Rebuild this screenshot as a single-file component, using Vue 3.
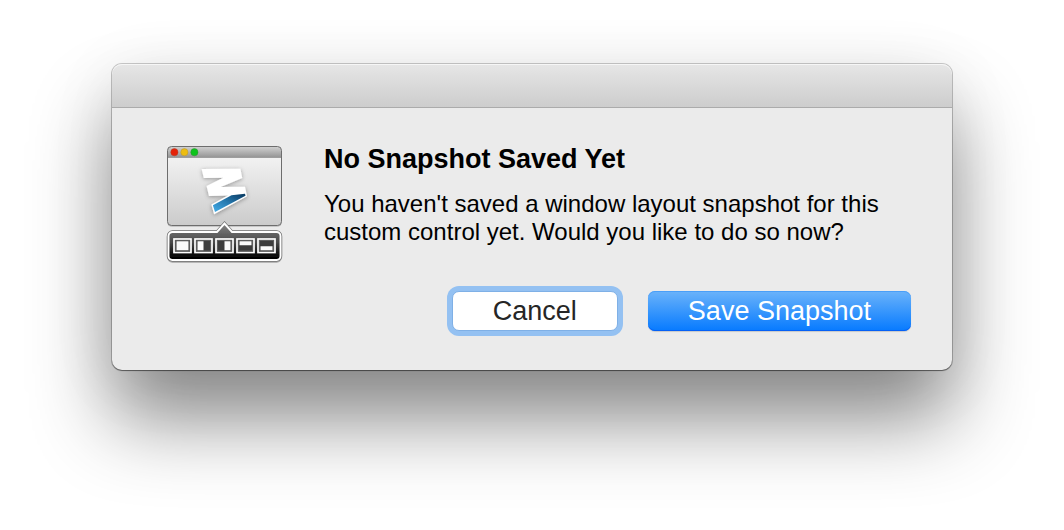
<script setup>
// Layout thumbnails: white pane inside each 12x9 cell
const layouts = [
  { x: 0, y: 0, w: 12, h: 9 },
  { x: 0, y: 0, w: 6, h: 9 },
  { x: 6, y: 0, w: 6, h: 9 },
  { x: 0, y: 0, w: 12, h: 4 },
  { x: 0, y: 5, w: 12, h: 4 },
]
</script>

<template>
  <main class="stage">
    <section class="dialog" role="alertdialog" aria-labelledby="title" aria-describedby="message">
      <header class="titlebar"></header>
      <div class="content">
        <svg class="icon" viewBox="0 0 120 120" aria-hidden="true">
          <defs>
            <linearGradient id="pane" x1="0" y1="0" x2="0" y2="1">
              <stop offset="0" stop-color="#f8f8f8" />
              <stop offset="1" stop-color="#cbcbcb" />
            </linearGradient>
            <linearGradient id="bar" x1="0" y1="0" x2="0" y2="1">
              <stop offset="0" stop-color="#d2d2d2" />
              <stop offset="1" stop-color="#939393" />
            </linearGradient>
            <linearGradient id="dark" x1="0" y1="82" x2="0" y2="115" gradientUnits="userSpaceOnUse">
              <stop offset="0" stop-color="#7c7c7c" />
              <stop offset="0.5" stop-color="#484848" />
              <stop offset="0.85" stop-color="#101010" />
              <stop offset="1" stop-color="#000" />
            </linearGradient>
            <linearGradient id="blue" x1="0" y1="1" x2="1" y2="0">
              <stop offset="0.1" stop-color="#3fa4de" />
              <stop offset="0.5" stop-color="#2678ae" />
              <stop offset="0.9" stop-color="#0d426b" />
            </linearGradient>
            <filter id="soft" x="-30%" y="-30%" width="160%" height="160%">
              <feDropShadow dx="0" dy="1" stdDeviation="2" flood-color="#000" flood-opacity="0.35" />
            </filter>
            <filter id="edge" x="-10%" y="-10%" width="120%" height="130%">
              <feDropShadow dx="0" dy="1" stdDeviation="0.7" flood-color="#000" flood-opacity="0.3" />
            </filter>
          </defs>

          <rect x="3.5" y="2.5" width="114" height="79" rx="4" fill="url(#pane)" filter="url(#edge)" />
          <path d="M3.5 13.5V6.5a4 4 0 0 1 4-4h106a4 4 0 0 1 4 4v7z" fill="url(#bar)" />
          <path d="M4 13.5h113" stroke="#858585" stroke-width="0.6" />
          <rect x="3.5" y="2.5" width="114" height="79" rx="4" fill="none" stroke="#6d6d6d" />
          <circle cx="10.4" cy="8.2" r="3.6" fill="#e52208" stroke="#b53a25" stroke-width="0.5" />
          <circle cx="20.4" cy="8.2" r="3.6" fill="#edbd10" stroke="#b79732" stroke-width="0.5" />
          <circle cx="30.4" cy="8.2" r="3.6" fill="#0dc41b" stroke="#2f8e36" stroke-width="0.5" />

          <g filter="url(#soft)">
            <path d="M37.7 25 76.4 24.7 78.2 34 56.7 43 81 42.7 83 52.2 50.1 70.2 47.4 60.4 64 51.4 45 51.9 42.6 42 59.4 33.7 39.8 34z" fill="#fff" />
            <path d="M48.900 61.200 67.500 51.200 81 49.700 81.500 51.700 51 68.100z" fill="url(#blue)" />
          </g>

          <g filter="url(#edge)">
            <path d="M8.5 88H53l7.5-8.5L68 88h44.500a4 4 0 0 1 4 4v20a4 4 0 0 1-4 4H8.500a4 4 0 0 1-4-4V92a4 4 0 0 1 4-4z" fill="none" stroke="#6f6f6f" stroke-width="3.400" />
            <path d="M8.5 88H53l7.500-8.500L68 88h44.500a4 4 0 0 1 4 4v20a4 4 0 0 1-4 4H8.500a4 4 0 0 1-4-4V92a4 4 0 0 1 4-4z" fill="url(#dark)" stroke="#fff" stroke-width="1.900" />
          </g>
          <g v-for="(pane, i) in layouts" :key="i" :transform="`translate(${9 + i * 21} 94)`">
            <rect x="1" y="1" width="17" height="13.500" fill="#3c3c3c" stroke="#fff" stroke-width="1.700" />
            <rect x="2.500" y="2.500" width="14" height="10.500" fill="none" stroke="#5c5c5c" />
            <rect :x="pane.x + 3.5" :y="pane.y + 3.25" :width="pane.w" :height="pane.h" fill="#fafafa" />
          </g>
        </svg>

        <div class="text">
          <h1 id="title">No Snapshot Saved Yet</h1>
          <p id="message">You haven't saved a window layout snapshot for this custom control yet. Would you like to do so now?</p>
        </div>

        <div class="actions">
          <button type="button" class="cancel">Cancel</button>
          <button type="button" class="save">Save Snapshot</button>
        </div>
      </div>
    </section>
  </main>
</template>

<style>
body {
  margin: 0;
  background: #fff;
}
</style>

<style scoped>
.stage {
  box-sizing: border-box;
  min-height: 100vh;
  padding: 64px 112px;
  overflow: hidden;
  font-family: "Liberation Sans", Arial, sans-serif;
}

.dialog {
  border-radius: 10px;
  background: #ebebeb;
  box-shadow:
    0 0 0 1px rgba(0, 0, 0, 0.2),
    0 1px 1px rgba(0, 0, 0, 0.4),
    0 10px 70px rgba(0, 0, 0, 0.07),
    0 50px 80px rgba(0, 0, 0, 0.45);
}

.titlebar {
  box-sizing: border-box;
  height: 44px;
  border-bottom: 1px solid #ababab;
  border-radius: 10px 10px 0 0;
  background: linear-gradient(#e6e6e6, #cdcdcd);
  box-shadow: inset 0 1px 0 #f6f6f6;
}

.content {
  display: grid;
  grid-template-columns: 120px 1fr;
  column-gap: 40px;
  row-gap: 27px;
  padding: 36px 41px 39px 52px;
}

.icon {
  display: block;
  width: 120px;
  height: 120px;
}

.text {
  color: #000;
}

h1 {
  margin: 0 0 16px;
  font-size: 27px;
  line-height: 30px;
  font-weight: 700;
}

p {
  margin: 0;
  font-size: 24px;
  line-height: 28px;
}

.actions {
  grid-column: 1 / -1;
  display: flex;
  justify-content: flex-end;
  gap: 30px;
}

button {
  height: 40px;
  padding: 0 40px;
  border: 0;
  border-radius: 7px;
  font-family: inherit;
  font-size: 27px;
  line-height: 38px;
}

.cancel {
  border: 1px solid #7fb0e6;
  background: #fff;
  color: #262626;
  box-shadow: 0 0 0 5px #94c1f2;
}

.save {
  background: linear-gradient(#6bb3fa, #067aff);
  color: #fff;
  box-shadow: inset 0 1px 0 #4a9ff8, inset 0 -1px 0 #0560f5, 0 1px 1px rgba(0, 0, 0, 0.15);
}
</style>
